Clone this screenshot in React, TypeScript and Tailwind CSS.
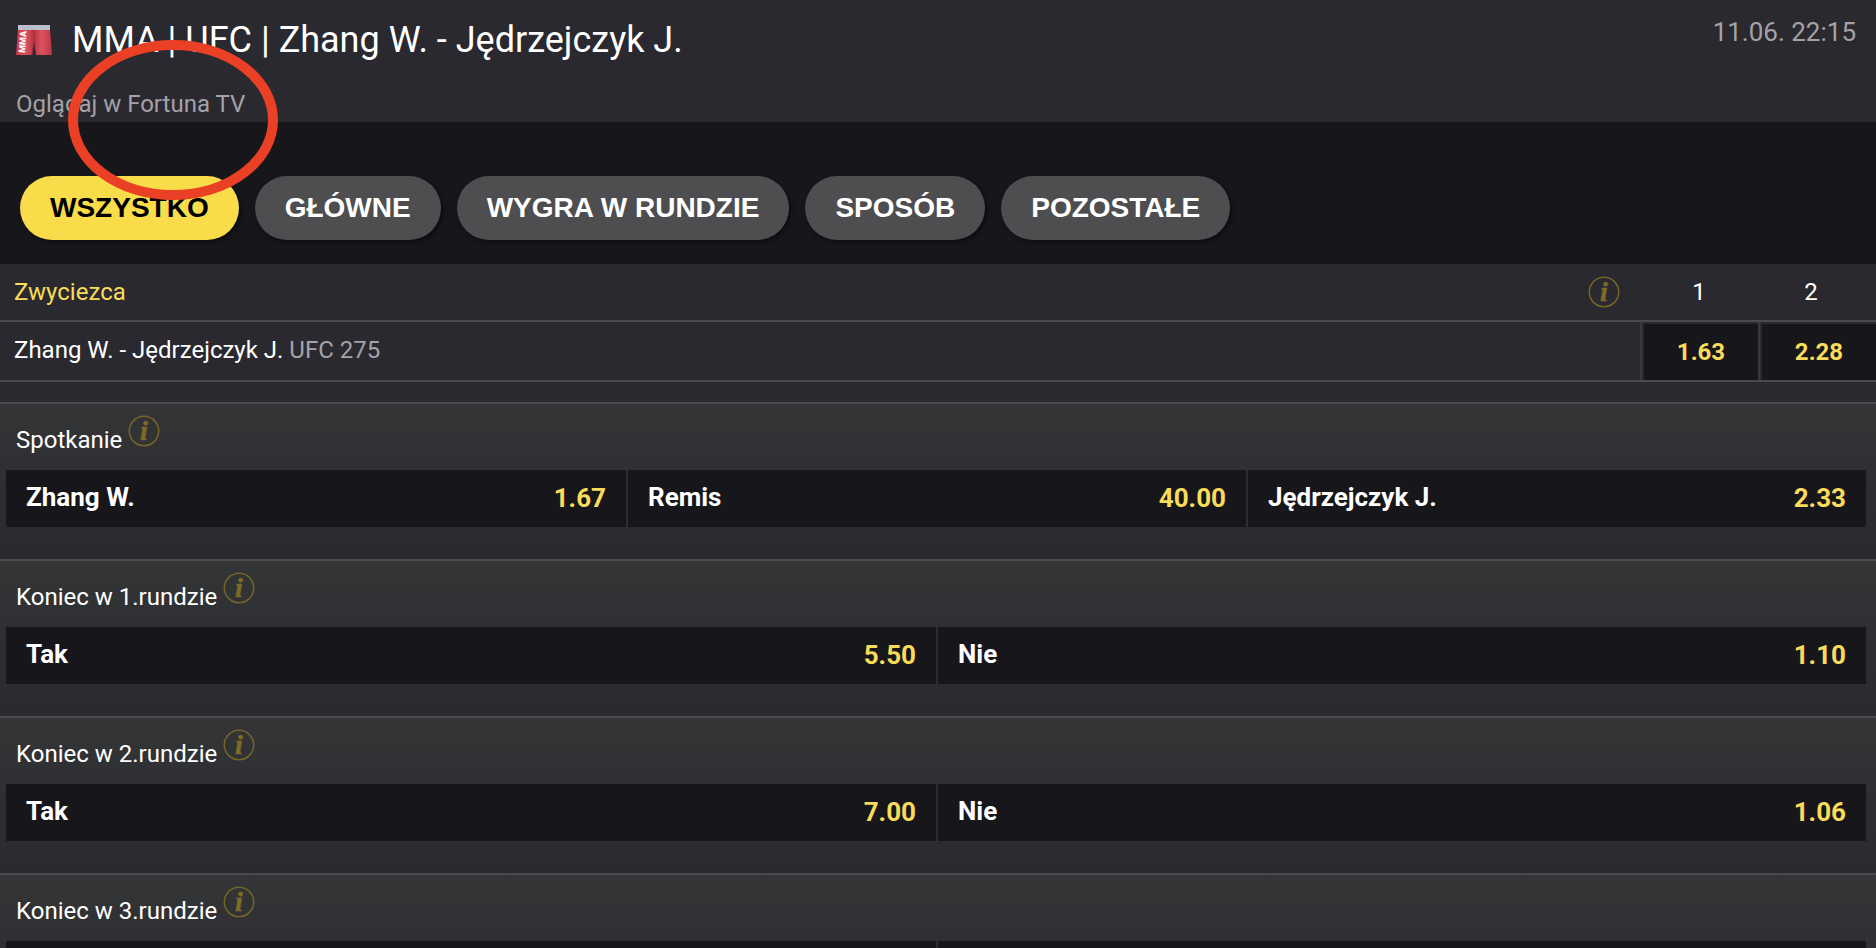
import clsx from 'clsx';

const tabs = ['Wszystko', 'Główne', 'Wygra w rundzie', 'Sposób', 'Pozostałe'];

const markets = [
  {
    title: 'Spotkanie',
    options: [
      { name: 'Zhang W.', odds: '1.67' },
      { name: 'Remis', odds: '40.00' },
      { name: 'Jędrzejczyk J.', odds: '2.33' },
    ],
  },
  {
    title: 'Koniec w 1.rundzie',
    options: [
      { name: 'Tak', odds: '5.50' },
      { name: 'Nie', odds: '1.10' },
    ],
  },
  {
    title: 'Koniec w 2.rundzie',
    options: [
      { name: 'Tak', odds: '7.00' },
      { name: 'Nie', odds: '1.06' },
    ],
  },
  {
    title: 'Koniec w 3.rundzie',
    options: [
      { name: '', odds: '' },
      { name: '', odds: '' },
    ],
  },
];

function ShortsIcon() {
  return (
    <svg width="36" height="30" viewBox="0 0 36 30" className="shrink-0" aria-hidden="true">
      <defs>
        <linearGradient id="shorts" x1="0" x2="1" y1="0" y2="0">
          <stop offset="0" stopColor="#c93a49" />
          <stop offset="0.3" stopColor="#d9505d" />
          <stop offset="0.5" stopColor="#b93442" />
          <stop offset="0.72" stopColor="#dd545f" />
          <stop offset="1" stopColor="#bd3543" />
        </linearGradient>
      </defs>
      <path d="M2 4H34L36 30H20L18 16L16 30H0Z" fill="url(#shorts)" />
      <path d="M18 5V16L16 30" fill="none" stroke="#9c2b38" strokeWidth="1" />
      <rect x="2" y="0" width="32" height="5" fill="#b9bfcb" />
      <text
        transform="translate(9 28) rotate(-86)"
        fill="#fff"
        fontSize="9"
        fontWeight="900"
        fontFamily="Roboto, sans-serif"
      >
        MMA
      </text>
    </svg>
  );
}

function InfoButton({ className }: { className?: string }) {
  return (
    <button type="button" aria-label="Informacje" className={clsx('block shrink-0', className)}>
      <svg width="32" height="32" viewBox="0 0 32 32" className="overflow-visible">
        <circle cx="16" cy="16" r="14.7" fill="none" stroke="#756526" strokeWidth="1.5" />
        <text
          x="16"
          y="25"
          textAnchor="middle"
          fill="#7d6b26"
          stroke="#7d6b26"
          strokeWidth="0.6"
          fontSize="28"
          fontWeight="700"
          fontStyle="italic"
          fontFamily="Liberation Serif, serif"
        >
          i
        </text>
      </svg>
    </button>
  );
}

export default function App() {
  return (
    <div className="relative h-screen overflow-hidden bg-[#2a292f] font-[Roboto,sans-serif] text-2xl text-white">
      {/* Match header */}
      <header className="flex items-start justify-between pl-4 pr-5 pt-4">
        <div>
          <div className="flex items-center gap-5">
            <ShortsIcon />
            <h1 className="text-4xl leading-12">MMA | UFC | Zhang W. - Jędrzejczyk J.</h1>
          </div>
          <a href="#tv" className="mt-6 block pb-0.5 leading-8 text-[#a3a2a6]">
            Oglądaj w Fortuna TV
          </a>
        </div>
        <time className="text-[26px] leading-8 text-[#a3a2a6]">11.06. 22:15</time>
      </header>

      {/* Market filters */}
      <nav className="flex gap-4 bg-[#17161b] px-5 pb-6 pt-[54px]">
        {tabs.map((tab, index) => (
          <button
            key={tab}
            type="button"
            className={clsx(
              'h-16 rounded-full px-[30px] font-[Liberation_Sans,Arial,sans-serif] text-[28px] font-bold uppercase shadow-[2px_2px_4px_rgba(0,0,0,0.5)]',
              index === 0 ? 'bg-[#f8dc4a] text-black' : 'bg-[#4e4e50] text-white',
            )}
          >
            {tab}
          </button>
        ))}
      </nav>

      {/* Winner */}
      <table className="w-full table-fixed border-collapse">
        <thead>
          <tr className="h-[57px] border-b-2 border-[#4b4a4f]">
            <th className="px-3.5 text-left font-normal text-[#f8dc5a]">
              <div className="flex items-center justify-between pr-1.5">
                Zwyciezca
                <InfoButton />
              </div>
            </th>
            <th className="w-[118px] font-normal">1</th>
            <th className="w-[118px] pr-3 font-normal">2</th>
          </tr>
        </thead>
        <tbody>
          <tr className="h-[60px] border-b-2 border-[#4b4a4f]">
            <td className="px-3.5 pb-0.5">
              Zhang W. - Jędrzejczyk J. <span className="text-[#a3a2a6]">UFC 275</span>
            </td>
            {['1.63', '2.28'].map((odds) => (
              <td key={odds} className="h-[60px] p-0">
                <div className="border-l-2 border-[#38373c] pl-0.5 pt-0.5">
                  <button
                    type="button"
                    className="block h-14 w-full bg-[#17161b] font-bold text-[#f8dc5a]"
                  >
                    {odds}
                  </button>
                </div>
              </td>
            ))}
          </tr>
        </tbody>
      </table>

      {/* Other markets */}
      <div className="mt-5">
        {markets.map((market) => (
          <section
            key={market.title}
            className="border-t-2 border-[#4b4b4d] bg-linear-to-b from-[#333536] to-[#2a292f] pb-8 pl-1.5 pr-2.5"
          >
            <div className="flex h-[66px] gap-1.5 pl-2.5">
              <h2 className="pt-5 leading-8">{market.title}</h2>
              <InfoButton className="self-start pt-[11px]" />
            </div>
            <div
              className={clsx(
                'grid bg-[#17161b]',
                market.options.length === 3 ? 'grid-cols-3' : 'grid-cols-2',
              )}
            >
              {market.options.map((option, index) => (
                <button
                  key={index}
                  type="button"
                  className={clsx(
                    'flex h-[57px] items-center justify-between px-5 text-[26px] font-bold',
                    index > 0 && 'border-l-2 border-[#2e2e32]',
                  )}
                >
                  <span className="pb-0.5">{option.name}</span>
                  <span className="text-[#f8dc5a]">{option.odds}</span>
                </button>
              ))}
            </div>
          </section>
        ))}
      </div>

      {/* Red marker ring */}
      <svg
        width="212"
        height="162"
        viewBox="0 0 212 162"
        className="pointer-events-none absolute left-[67px] top-[39px]"
        aria-hidden="true"
      >
        <ellipse cx="106" cy="81" rx="100" ry="75" fill="none" stroke="#ea4025" strokeWidth="10" />
      </svg>
    </div>
  );
}
